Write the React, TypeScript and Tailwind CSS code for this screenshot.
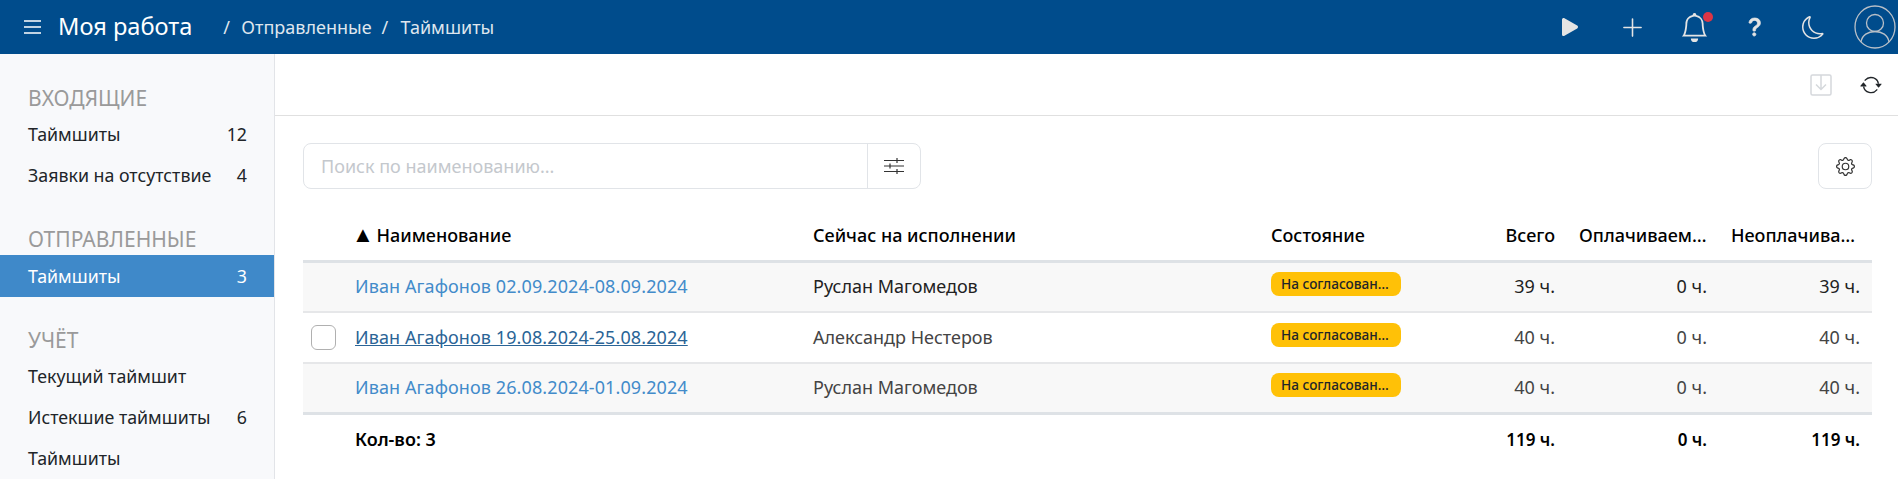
import React from "react";
import { BsBell, BsMoon, BsPlayFill, BsPlusLg, BsQuestionLg, BsArrowRepeat, BsGear } from "react-icons/bs";

const font = { fontFamily: '"Noto Sans", sans-serif' };

type NavItem = { label: string; count?: number; active?: boolean };

const nav: { title: string; items: NavItem[] }[] = [
  { title: "Входящие", items: [{ label: "Таймшиты", count: 12 }, { label: "Заявки на отсутствие", count: 4 }] },
  { title: "Отправленные", items: [{ label: "Таймшиты", count: 3, active: true }] },
  { title: "Учёт", items: [{ label: "Текущий таймшит" }, { label: "Истекшие таймшиты", count: 6 }, { label: "Таймшиты" }] },
];

const rows = [
  { name: "Иван Агафонов 02.09.2024-08.09.2024", who: "Руслан Магомедов", total: "39 ч.", paid: "0 ч.", unpaid: "39 ч." },
  { name: "Иван Агафонов 19.08.2024-25.08.2024", who: "Александр Нестеров", total: "40 ч.", paid: "0 ч.", unpaid: "40 ч.", hover: true },
  { name: "Иван Агафонов 26.08.2024-01.09.2024", who: "Руслан Магомедов", total: "40 ч.", paid: "0 ч.", unpaid: "40 ч." },
];

function Header() {
  return (
    <header className="flex h-[54px] items-center bg-[#004c8c] pl-6 pr-[2px] text-white">
      <svg width="17" height="14" viewBox="0 0 17 14" stroke="#fff" strokeWidth="1.5">
        <path d="M0 1h17M0 7h17M0 13h17" />
      </svg>
      <span className="ml-[17px] text-[23.6px] leading-none">Моя работа</span>
      <div className="ml-[31px] flex items-center text-[18px] text-[#dfe6ee]">
        <span className="w-[18px]">/</span>
        <span>Отправленные</span>
        <span className="ml-[10px] w-[19px]">/</span>
        <span>Таймшиты</span>
      </div>
      <div className="ml-auto flex items-center text-[#e4e4e4]">
        <BsPlayFill size={32} className="mr-[34px]" />
        <BsPlusLg size={25} className="mr-[35px]" />
        <div className="relative mr-[34px]">
          <BsBell size={29} />
          <span className="absolute right-[-4px] top-[-1px] h-[10px] w-[10px] rounded-full bg-[#dc3545]" />
        </div>
        <BsQuestionLg size={24} stroke="currentColor" strokeWidth={0.5} className="mr-[35px]" />
        <BsMoon size={23} className="mr-[29px]" />
        <svg width="42" height="44" viewBox="0 0 42 44" fill="none" stroke="#b9c0c8" strokeWidth="1.3">
          <ellipse cx="21" cy="22" rx="20" ry="21" />
          <circle cx="21" cy="18" r="8.500" />
          <path d="M7 37c1-7 7-10.500 14-10.500S34 30 35 37" />
        </svg>
      </div>
    </header>
  );
}

function Sidebar() {
  return (
    <aside className="w-[275px] shrink-0 border-r border-[#e2e4e8] bg-[#f8f9fb] pt-[28px]">
      {nav.map((group) => (
        <div key={group.title} className="mb-[27px]">
          <div className="px-7 text-[21px] uppercase leading-[32px] text-[#9a9a9a]">{group.title}</div>
          {group.items.map((item) => (
            <div
              key={item.label}
              className={
                item.active
                  ? "flex h-[42px] items-center justify-between bg-[#3f89c9] pl-7 pr-[27px] text-[17.8px] text-white"
                  : "flex h-[41px] items-center justify-between pl-7 pr-[27px] text-[17.8px] text-[#212529]"
              }
            >
              <span>{item.label}</span>
              {item.count !== undefined && <span>{item.count}</span>}
            </div>
          ))}
        </div>
      ))}
    </aside>
  );
}

function Th({ children, right }: { children: React.ReactNode; right?: boolean }) {
  return (
    <th className={"truncate px-3 pb-[11px] pt-[23px] text-[18px] font-medium text-black " + (right ? "text-right" : "text-left")}>
      {children}
    </th>
  );
}

function Table() {
  return (
    <table className="mt-[10px] w-full table-fixed border-collapse">
      <colgroup>
        <col className="w-[40px]" />
        <col className="w-[458px]" />
        <col className="w-[458px]" />
        <col className="w-[162px]" />
        <col className="w-[146px]" />
        <col className="w-[152px]" />
        <col className="w-[153px]" />
      </colgroup>
      <thead>
        <tr className="border-b-[3px] border-[#dee2e6]">
          <th />
          <Th>
            <span className="ml-[-3px] mr-[-2px] text-[22px] leading-none">▲</span> Наименование
          </Th>
          <Th>Сейчас на исполнении</Th>
          <Th>Состояние</Th>
          <Th right>Всего</Th>
          <Th right>Оплачиваемые</Th>
          <Th right>Неоплачиваемые</Th>
        </tr>
      </thead>
      <tbody className="text-[18px]">
        {rows.map((r, i) => (
          <tr
            key={r.name}
            className={
              (i === 0 ? "h-[50px] " : "h-[51px] ") +
              (i === 2 ? "border-b-[3px] border-[#dee2e6] " : "border-b-2 border-[#e6e7e9] ") +
              (i === 1 ? "bg-white " : "bg-[#f8f8f8] ") +
              (i === 0 ? "text-[#222]" : "text-[#444]")
            }
          >
            <td className="pl-2">
              {r.hover && <div className="h-[25px] w-[25px] rounded-[6px] border border-[#b0b0b0] bg-white" />}
            </td>
            <td className="truncate px-3 tracking-[0.1px]">
              <a className={r.hover ? "text-[#2a6496] underline" : "text-[#428bca]"}>{r.name}</a>
            </td>
            <td className="truncate px-3">{r.who}</td>
            <td className="px-3">
              <span className="-mt-[5px] block h-[24px] w-[130px] truncate rounded-[8px] bg-[#ffc107] px-[10px] text-[13.6px] font-medium leading-[24px] text-[#212529]">
                На согласовании
              </span>
            </td>
            <td className="px-3 text-right">{r.total}</td>
            <td className="px-3 text-right">{r.paid}</td>
            <td className="px-3 text-right">{r.unpaid}</td>
          </tr>
        ))}
      </tbody>
      <tfoot>
        <tr className="h-[50px] text-[17px] font-semibold text-black">
          <td />
          <td className="px-3 text-[18px]">Кол-во: 3</td>
          <td />
          <td />
          <td className="px-3 text-right">119 ч.</td>
          <td className="px-3 text-right">0 ч.</td>
          <td className="px-3 text-right">119 ч.</td>
        </tr>
      </tfoot>
    </table>
  );
}

export default function App() {
  return (
    <div className="flex h-[479px] flex-col overflow-hidden bg-white" style={font}>
      <Header />
      <div className="flex min-h-0 flex-1">
        <Sidebar />
        <main className="min-w-0 flex-1">
          <div className="flex h-[62px] items-center justify-end gap-[28px] border-b border-[#e0e0e0] pr-[16px]">
            <svg width="22" height="22" viewBox="0 0 22 22" fill="none" stroke="#d5d8dc" strokeWidth="1.5">
              <rect x="1" y="1" width="20" height="20" rx="1.500" />
              <path d="M11 1v14M6 10.500l5 5 5-5" />
            </svg>
            <BsArrowRepeat size={22} className="text-[#212529]" />
          </div>
          <div className="pl-7 pr-[26px] pt-[27px]">
            <div className="flex items-center justify-between">
              <div className="flex h-[46px] w-[618px] items-center rounded-[8px] border border-[#e1e4e8]">
                <input
                  placeholder="Поиск по наименованию..."
                  className="h-full min-w-0 flex-1 bg-transparent px-[17px] text-[18px] outline-none placeholder:text-[#c4c8cd]"
                />
                <div className="flex h-full w-[53px] items-center justify-center border-l border-[#e1e4e8]">
                  <svg width="20" height="16" viewBox="0 0 20 16" stroke="#333" strokeWidth="1.2">
                    <path d="M0 2.500h20M0 8h20M0 13.500h20M13 0v5M6 5.500v5M13 11v5" />
                  </svg>
                </div>
              </div>
              <div className="flex h-[46px] w-[54px] items-center justify-center rounded-[8px] border border-[#e1e4e8]">
                <BsGear size={19} className="text-[#333]" />
              </div>
            </div>
            <Table />
          </div>
        </main>
      </div>
    </div>
  );
}
